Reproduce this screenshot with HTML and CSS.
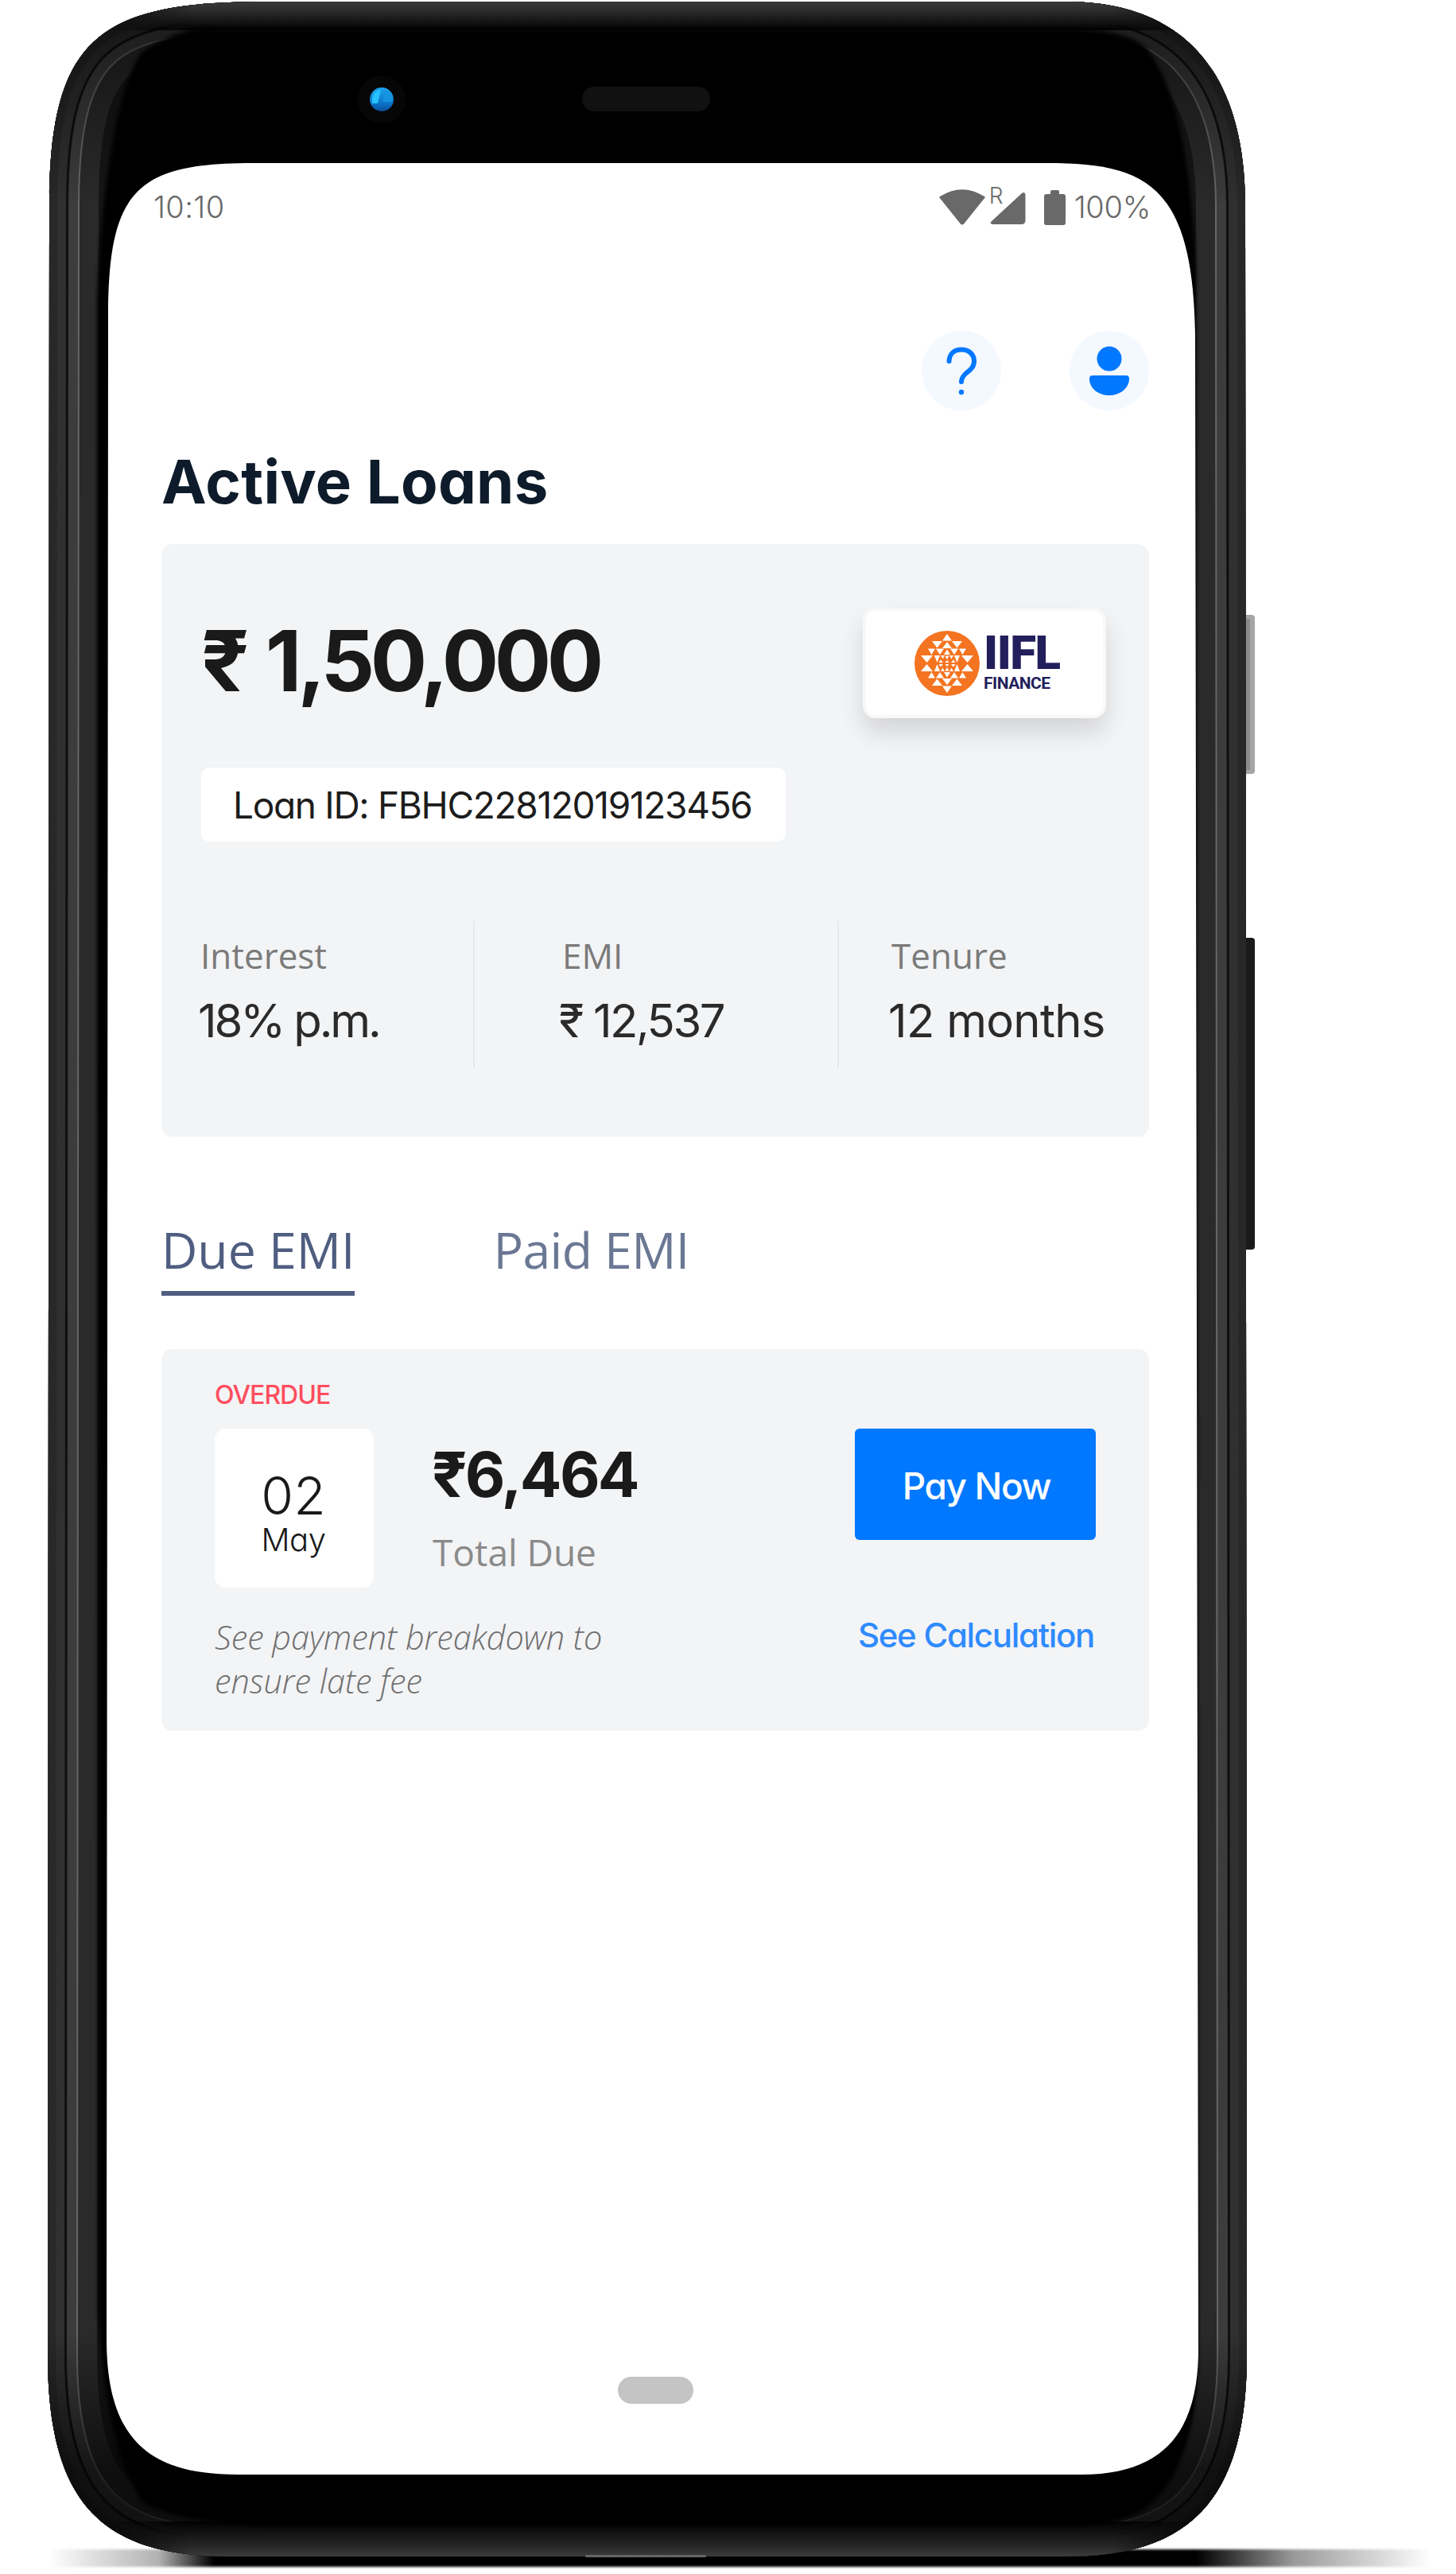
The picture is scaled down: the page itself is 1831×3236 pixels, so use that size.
FILE: index.html
```html
<!DOCTYPE html>
<html lang="en">
<head>
<meta charset="utf-8">
<title>Active Loans</title>
<link rel="stylesheet" href="styles.css">
</head>
<body>
<main class="device">
  <svg class="frame" viewBox="0 0 1831 3236" width="1831" height="3236" aria-hidden="true">
    <defs>
      <path id="outer" d="M340 2H1340C1470 2 1566 70 1566 260L1568 2960C1568 3150 1490 3214 1340 3214H290C130 3214 60 3150 60 2960L62 260C62 40 130 2 340 2Z"/>
      <clipPath id="outerClip"><use href="#outer"/></clipPath>
      <linearGradient id="shadowFade" x1="0" x2="1" y1="0" y2="0">
        <stop offset="0" stop-color="#000" stop-opacity="0"/>
        <stop offset=".08" stop-color="#000" stop-opacity=".3"/>
        <stop offset=".12" stop-color="#000"/>
        <stop offset=".83" stop-color="#000"/>
        <stop offset=".9" stop-color="#000" stop-opacity=".4"/>
        <stop offset="1" stop-color="#000" stop-opacity="0"/>
      </linearGradient>
      <linearGradient id="topBand" x1="0" x2="0" y1="0" y2="1">
        <stop offset="0" stop-color="#3a3a3a"/>
        <stop offset=".35" stop-color="#2a2a2a"/>
        <stop offset=".75" stop-color="#111"/>
        <stop offset="1" stop-color="#000"/>
      </linearGradient>
      <linearGradient id="bottomBand" x1="0" x2="0" y1="0" y2="1">
        <stop offset="0" stop-color="#000"/>
        <stop offset=".35" stop-color="#141414"/>
        <stop offset=".7" stop-color="#262626"/>
        <stop offset="1" stop-color="#3c3c3c"/>
      </linearGradient>
      <linearGradient id="cornerShadeTop" x1="0" x2="0" y1="0" y2="1">
        <stop offset="0" stop-color="#000" stop-opacity=".6"/>
        <stop offset="1" stop-color="#000" stop-opacity="0"/>
      </linearGradient>
      <linearGradient id="cornerShadeBottom" x1="0" x2="0" y1="0" y2="1">
        <stop offset="0" stop-color="#000" stop-opacity="0"/>
        <stop offset=".6" stop-color="#000" stop-opacity=".65"/>
        <stop offset="1" stop-color="#000" stop-opacity=".75"/>
      </linearGradient>
      <linearGradient id="fadeEnds" x1="0" x2="1" y1="0" y2="0">
        <stop offset="0" stop-color="#fff" stop-opacity="0"/>
        <stop offset=".08" stop-color="#fff"/>
        <stop offset=".92" stop-color="#fff"/>
        <stop offset="1" stop-color="#fff" stop-opacity="0"/>
      </linearGradient>
      <mask id="bandMask" maskUnits="userSpaceOnUse" x="130" y="0" width="1380" height="3236">
        <rect x="130" y="0" width="1380" height="3236" fill="url(#fadeEnds)"/>
      </mask>
      <filter id="soft" x="-5%" y="-5%" width="110%" height="110%"><feGaussianBlur stdDeviation="2.5"/></filter>
      <filter id="softer" x="-5%" y="-100%" width="110%" height="300%"><feGaussianBlur stdDeviation="1.5"/></filter>
      <linearGradient id="lens" x1="0" x2="0" y1="0" y2="1">
        <stop offset="0" stop-color="#1aa9f0"/>
        <stop offset=".7" stop-color="#0d6fc4"/>
        <stop offset="1" stop-color="#0a4f9a"/>
      </linearGradient>
    </defs>

    <rect x="60" y="3205" width="1740" height="22" fill="url(#shadowFade)" filter="url(#softer)"/>
    <rect x="1563" y="773" width="15" height="200" rx="4" fill="#a5a5a5"/>
    <rect x="1566" y="778" width="6" height="190" fill="#8b8b8b"/>
    <rect x="1563" y="1179" width="15" height="392" rx="4" fill="#1a1a1a"/>

    <use href="#outer" fill="#161616"/>
    <g clip-path="url(#outerClip)">
      <g fill="none">
        <use href="#outer" stroke="#2a2a2a" stroke-width="124"/>
        <use href="#outer" stroke="#666" stroke-width="76"/>
        <use href="#outer" stroke="#3c3c3c" stroke-width="72"/>
        <use href="#outer" stroke="#0f0f0f" stroke-width="48"/>
        <use href="#outer" stroke="#303030" stroke-width="42"/>
        <use href="#outer" stroke="#282828" stroke-width="20"/>
      </g>
      <rect x="0" y="0" width="1831" height="260" fill="url(#cornerShadeTop)"/>
      <rect x="0" y="2930" width="1831" height="290" fill="url(#cornerShadeBottom)"/>
      <g mask="url(#bandMask)">
        <rect x="130" y="2" width="1380" height="36" fill="url(#topBand)"/>
        <rect x="130" y="3170" width="1380" height="44" fill="url(#bottomBand)"/>
      </g>
    </g>
    <path filter="url(#soft)" fill="#000" d="M250 36H1340C1400 36 1440 50 1446 67C1480 110 1500 220 1504 340L1507 2960C1505 3060 1480 3120 1449 3147C1420 3170 1380 3176 1340 3176H380C300 3176 230 3172 180 3147C150 3100 130 3030 123 2900L122 400C122 300 140 120 177 67C200 50 230 38 250 36Z"/>
    <rect x="736" y="3212" width="152" height="3" rx="1.5" fill="#666"/>

    <circle cx="480" cy="125" r="30" fill="#060606"/>
    <circle cx="480" cy="125" r="15" fill="url(#lens)"/>
    <path d="M471 116Q475 113 479 113L475 130H468Q467 122 471 116Z" fill="#25c2ff"/>
    <path d="M482 113Q490 113 493 122V128H482Z" fill="#1593e0"/>
    <rect x="732" y="109" width="161" height="31" rx="15.5" fill="#111"/>

    <path fill="#fff" d="M317 205H1316C1440 205 1500 230 1503 420L1507 2960C1505 3050 1470 3111 1360 3111H300C190 3111 134 3070 134 2940L136 400C136 240 170 205 317 205Z"/>
  </svg>

  <section class="screen">
    <header class="status">
      <span class="clock">10:10</span>
      <div class="status-right">
        <svg class="ic-wifi" width="58" height="46" viewBox="0 0 58 46"><path d="M1 11Q29 -7 57 11L30.500 44Q29 45.500 27.500 44Z" fill="#696969" stroke="#696969" stroke-width="1.500" stroke-linejoin="round"/></svg>
        <span class="roam">R</span>
        <svg class="ic-signal" width="45" height="42" viewBox="0 0 45 42"><path d="M1.500 37.500L40 2Q44 -.5 44.500 4V36Q44.500 41 39.500 41H3Q-.5 40.500 1.500 37.500Z" fill="#696969"/></svg>
        <svg class="ic-battery" width="27" height="44" viewBox="0 0 27 44"><path d="M8 5V2Q8 0 10 0H17Q19 0 19 2V5H24Q27 5 27 8V41Q27 44 24 44H3Q0 44 0 41V8Q0 5 3 5Z" fill="#696969"/></svg>
        <span class="pct">100%</span>
      </div>
    </header>

    <div class="content">
      <nav class="actions">
        <span class="round-btn"><svg width="100" height="100" viewBox="0 0 100 100"><path d="M34.500 38C35 28 42 23.500 50 23.500C60 23.500 66 30 66 38C66 47 59 50 55 54C52 57 50 60 50 64" fill="none" stroke="#0078ff" stroke-width="6" stroke-linecap="round"/><circle cx="50" cy="77" r="3.200" fill="#0078ff"/></svg></span>
        <span class="round-btn"><svg width="100" height="100" viewBox="0 0 100 100"><circle cx="50" cy="35" r="15.500" fill="#0078ff"/><path d="M29 56H71Q75 56 75 60C75 73 62 81 50 81C37 81 25 73 25 60Q25 56 29 56Z" fill="#0078ff"/></svg></span>
      </nav>

      <h1 class="title">Active Loans</h1>

      <article class="loan-card">
        <div class="loan-top">
          <div class="amount">₹ 1,50,000</div>
          <div class="lender">
            <svg class="seal" width="82" height="82" viewBox="0 0 82 82">
              <defs>
                <g id="sealHalf" fill="#fff">
                  <polygon points="41,4 47,12.500 35,12.500"/>
                  <polygon points="22,13 35,13 28.500,21.500"/>
                  <polygon points="47,13 60,13 53.500,21.500"/>
                  <polygon points="41,14 47,22 35,22"/>
                  <polygon points="17,22.500 26,22.500 21.500,30"/>
                  <polygon points="27,22.500 37,22.500 32,30"/>
                  <polygon points="45,22.500 55,22.500 50,30"/>
                  <polygon points="56,22.500 65,22.500 60.500,30"/>
                  <polygon points="41,23.500 45,30 37,30"/>
                  <polygon points="8,31 23,31 15.500,40"/>
                  <polygon points="59,31 74,31 66.500,40"/>
                  <polygon points="25,31 32,31 28.500,40"/>
                  <polygon points="50,31 57,31 53.500,40"/>
                  <polygon points="33,31 38,31 35.500,35.500"/>
                  <polygon points="44,31 49,31 46.500,35.500"/>
                  <polygon points="38.500,31.500 43.500,31.500 41,36"/>
                  <polygon points="33,36.500 36,40 30.500,40"/>
                  <polygon points="49,36.500 51.500,40 46,40"/>
                  <polygon points="41,37 43.500,40 38.500,40"/>
                </g>
              </defs>
              <circle cx="41" cy="41" r="41" fill="#f47421"/>
              <use href="#sealHalf"/>
              <use href="#sealHalf" transform="matrix(1 0 0 -1 0 82)"/>
            </svg>
            <div class="brand">
              <span class="brand-main">IIFL</span>
              <span class="brand-sub">FINANCE</span>
            </div>
          </div>
        </div>
        <div class="loan-id">Loan ID: FBHC22812019123456</div>
        <div class="stats">
          <div class="stat">
            <div class="stat-label">Interest</div>
            <div class="stat-value stat-value-pct">18% p.m.</div>
          </div>
          <div class="stat">
            <div class="stat-label">EMI</div>
            <div class="stat-value stat-value-emi">₹ 12,537</div>
          </div>
          <div class="stat">
            <div class="stat-label">Tenure</div>
            <div class="stat-value stat-value-months">12 months</div>
          </div>
        </div>
      </article>

      <div class="tabs">
        <span class="tab tab-active">Due EMI</span>
        <span class="tab tab-other">Paid EMI</span>
      </div>

      <article class="emi-card">
        <div class="overdue">OVERDUE</div>
        <div class="emi-row">
          <div class="date">
            <span class="date-day">02</span>
            <span class="date-month">May</span>
          </div>
          <div class="due">
            <div class="due-amount">₹6,464</div>
            <div class="due-label">Total Due</div>
          </div>
          <button class="pay" type="button">Pay Now</button>
        </div>
        <div class="emi-foot">
          <p class="note">See payment breakdown to<br>ensure late fee</p>
          <a class="calc">See Calculation</a>
        </div>
      </article>
    </div>

    <div class="home-pill"></div>
  </section>
</main>
</body>
</html>
```

FILE: styles.css
```css
* { box-sizing: border-box; }
html, body { margin: 0; padding: 0; background: #fff; }
body { width: 1831px; height: 3236px; overflow: hidden; font-family: Inter, "Noto Sans", sans-serif; }

.device { position: relative; width: 1831px; height: 3236px; }
.frame { position: absolute; left: 0; top: 0; display: block; }
.screen {
  position: absolute; left: 135px; top: 205px; width: 1370px; height: 2906px;
  display: flex; flex-direction: column;
  font-feature-settings: "cv11" 1;
}

.status { height: 110px; display: flex; align-items: center; justify-content: space-between; padding: 0 58px 0 58px; color: #696969; }
.clock { font-size: 38px; font-weight: 300; letter-spacing: .4px; line-height: 1; }
.status-right { display: flex; align-items: center; }
.ic-wifi { margin-top: -1px; }
.roam { font-size: 28px; line-height: 1; align-self: flex-start; margin: -6px 0 0 5px; width: 14px; font-weight: 300; }
.ic-signal { margin: 3px 0 0 -13px; }
.ic-battery { margin: 1px 0 0 23px; }
.pct { font-size: 38px; font-weight: 300; letter-spacing: -.3px; line-height: 1; margin-left: 11px; }

.content { padding: 0 60px 0 68px; }
.actions { margin-top: 101px; height: 100px; display: flex; justify-content: flex-end; gap: 86px; }
.round-btn { width: 100px; height: 100px; border-radius: 50%; background: #f4f8ff; display: block; }
.round-btn svg { display: block; }

.title { margin: 44px 0 0; height: 90px; line-height: 90px; font-size: 76px; font-weight: 700; color: #0d1b2a; letter-spacing: .3px; }

.loan-card { margin-top: 34px; height: 745px; background: #f3f4f6; border-radius: 14px; padding: 80px 54px 0 50px; }
.loan-top { height: 139px; display: flex; justify-content: space-between; align-items: center; }
.amount { font-size: 106px; font-weight: 700; color: #1a1a1a; letter-spacing: -5.400px; word-spacing: 6px; line-height: 133px; margin-bottom: 6px; }
.lender { width: 306px; height: 139px; background: #fff; border: 4px solid #f8f8f8; border-radius: 16px; box-shadow: 0 18px 30px rgba(0, 0, 0, .13); display: flex; align-items: center; padding-left: 61px; gap: 5px; }
.seal { display: block; flex: none; }
.brand { display: flex; flex-direction: column; font-family: Roboto, "Liberation Sans", sans-serif; color: #231f5c; }
.brand-main { font-size: 60px; font-weight: 900; line-height: 46px; letter-spacing: -1.500px; }
.brand-sub { font-size: 21px; font-weight: 700; line-height: 22px; margin-top: 4px; letter-spacing: -.5px; }

.loan-id { margin-top: 62px; width: 735px; height: 93px; background: #fff; border-radius: 10px; display: flex; align-items: center; padding-left: 40px; font-size: 46px; color: #1c1c1c; letter-spacing: -1.300px; }

.stats { margin: 100px -54px 0 -50px; height: 184px; display: grid; grid-template-columns: 392px 458px 1fr; padding-left: 0; }
.stat { padding-top: 13px; padding-left: 110px; border-left: 2px solid #e6e7ea; }
.stat:first-child { border-left: 0; padding-left: 49px; }
.stat:last-child { padding-left: 66px; }
.stat-label { font-family: "Open Sans", sans-serif; font-size: 44px; line-height: 60px; color: #7a7a7a; }
.stat-value { margin: 17px 0 0 -4px; font-size: 58px; line-height: 70px; color: #2a2a2a; white-space: nowrap; }
.stat-value-pct { letter-spacing: -3.100px; margin-left: -3px; }
.stat-value-emi { letter-spacing: -2.400px; }
.stat-value-months { letter-spacing: -.7px; }

.tabs { margin-top: 102px; display: flex; gap: 174px; }
.tab { font-family: "Open Sans", sans-serif; font-size: 62.500px; line-height: 80px; color: #6b7894; padding-bottom: 12px; border-bottom: 6px solid transparent; }
.tab-active { color: #4f5d80; border-bottom-color: #4f5d80; }
.tab-other { letter-spacing: -.6px; }

.emi-card { margin-top: 67px; height: 480px; background: #f3f4f6; border-radius: 14px; padding: 43px 67px 0; }
.overdue { font-size: 32px; font-weight: 500; line-height: 30px; color: #ff4d5e; letter-spacing: -1px; }
.emi-row { margin-top: 27px; display: flex; align-items: flex-start; }
.date { width: 200px; height: 200px; background: #fff; border-radius: 14px; display: flex; flex-direction: column; align-items: center; padding: 51px 2px 0 0; color: #1a1a1a; }
.date-day { font-size: 66px; font-weight: 300; line-height: 66px; }
.date-month { font-size: 40px; font-weight: 300; line-height: 46px; letter-spacing: -.5px; }
.due { margin-left: 74px; padding-top: 18px; }
.due-amount { font-size: 78px; font-weight: 700; line-height: 80px; color: #1a1a1a; letter-spacing: -2.700px; margin-left: -1px; }
.due-label { margin-top: 27px; font-family: "Open Sans", sans-serif; font-size: 46px; line-height: 60px; color: #8a8a8a; }
.pay { margin-left: auto; width: 303px; height: 140px; background: #0078ff; border: 0; border-radius: 6px; color: #fff; font-family: Inter, sans-serif; font-feature-settings: "cv11" 1; font-size: 46px; font-weight: 500; letter-spacing: -1.400px; padding: 4px 0 0 3px; }
.emi-foot { margin-top: 35px; display: flex; justify-content: space-between; align-items: flex-start; }
.note { margin: 0; font-family: "Open Sans", sans-serif; font-style: italic; font-weight: 300; font-size: 41.400px; line-height: 55px; color: #6f6f6f; }
.calc { font-size: 42px; font-weight: 500; line-height: 40px; color: #2f8bff; letter-spacing: -1.300px; padding: 5px 2px 0 0; }

.home-pill { margin: auto 0 89px 642px; width: 95px; height: 34px; background: #c4c4c4; border-radius: 17px; flex: none; }
```
